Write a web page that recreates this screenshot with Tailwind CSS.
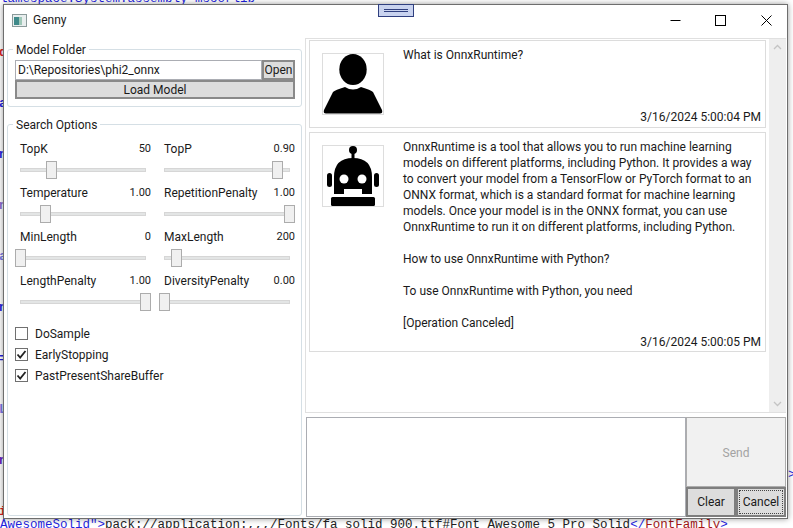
<!DOCTYPE html>
<html lang="en">
	<head>
		<meta charset="UTF-8" />
		<title>Genny</title>
		<script src="https://cdn.jsdelivr.net/npm/@tailwindcss/browser@4"></script>
	</head>
	<body class="bg-white">
		<div class="relative w-[793px] h-[528px] overflow-hidden bg-white font-['Roboto',sans-serif] text-[12px] text-[#1a1a1a]">
			<!-- editor behind the window -->
			<div class="absolute top-[11px] left-[-1px] font-['Liberation_Mono',monospace] text-[12.5px] leading-[17px] whitespace-pre font-bold text-[#1f1fe0]">
				<p class="text-[#d82020]">d</p>
				<p>a</p>
				<p>n</p>
				<p class="text-[#8a6ad0]">n</p>
				<p class="text-[#7a7ae8]">a</p>
				<p>n</p>
				<p>=</p>
				<p class="text-[#7a7ae8]">L</p>
				<p class="text-[#6020c0]">n</p>
				<p class="text-[#d82020]">i</p>
				<p class="text-[#f0a0a0]">=</p>
				<p class="text-[#d82020]">L</p>
				<p class="text-[#f0a0a0]">o</p>
				<p class="text-[#7a7ae8]">c</p>
				<p>L</p>
				<p>c</p>
				<p>a</p>
				<p>r</p>
				<p>c</p>
				<p>c</p>
				<p>c</p>
				<p>c</p>
				<p>c</p>
				<p>c</p>
				<p>A</p>
				<p>A</p>
				<p>A</p>
				<p>A</p>
			</div>
			<p class="absolute top-[-9px] left-0 font-['Liberation_Mono',monospace] text-[12.5px] leading-[17px] whitespace-pre text-[#1f1fe0]">lamespace:System.assembly=mscorlib</p>
			<p class="absolute top-[517px] left-0 font-['Liberation_Mono',monospace] text-[12.5px] leading-[17px] whitespace-pre text-[#1f1fe0]">AwesomeSolid"&gt;<span class="text-[#222]">pack://application:,,,/Fonts/fa_solid_900.ttf#Font Awesome 5 Pro Solid</span>&lt;/<span class="text-[#a31515]">FontFamily</span>&gt;</p>
			<p class="absolute top-[467px] left-[788px] font-['Liberation_Mono',monospace] text-[12.5px] leading-[17px] text-[#1f1fe0]">&gt;</p>

			<!-- app window -->
			<div class="absolute left-[3px] top-[4px] w-[785px] h-[515px] flex flex-col bg-white border border-[#6e6e6e] shadow-[0_0_6px_rgba(0,0,0,0.4)]">
				<div class="relative flex items-center h-[26px] shrink-0">
					<svg class="ml-[8px] mt-[4px] w-[15px] h-[13px]" viewBox="0 0 15 13">
						<rect x="0.5" y="0.5" width="14" height="12" fill="#e8eeee" stroke="#8a9a9a" />
						<rect x="2" y="3" width="5" height="8" fill="#3f8a8a" />
						<rect x="7" y="3" width="3" height="8" fill="#9fc8b8" />
					</svg>
					<span class="ml-[6px] mt-[4px]">Genny</span>
					<div class="ml-auto mt-[4px] flex items-center">
						<svg class="w-[11px] h-[11px]" viewBox="0 0 11 11"><path d="M0.5 5.5H10.5" stroke="#000" /></svg>
						<svg class="ml-[34px] w-[11px] h-[11px]" viewBox="0 0 11 11"><rect x="0.5" y="0.5" width="10" height="10" fill="none" stroke="#000" /></svg>
						<svg class="ml-[35px] mr-[15px] w-[11px] h-[11px]" viewBox="0 0 11 11"><path d="M0.5 0.5L10.5 10.5M10.5 0.5L0.5 10.5" stroke="#000" /></svg>
					</div>
				</div>

				<div class="flex flex-1 min-h-0">
					<!-- left options column -->
					<div class="w-[301px] shrink-0 pl-[3px] pr-[3px] pt-[18px] flex flex-col">
						<div class="relative h-[58px] border border-[#d5dfe5] rounded-[3px] pl-[7px] pr-[6px] pt-[10px]">
							<span class="absolute -top-[8px] left-[5px] bg-white px-[3px] leading-[16px]">Model Folder</span>
							<div class="flex h-[20px]">
								<div class="flex-1 border border-[#abadb3] pl-[2px] leading-[18px]">D:\Repositories\phi2_onnx</div>
								<button class="w-[33px] bg-[#dddddd] border-2 border-[#8a8a8a] leading-[14px]">Open</button>
							</div>
							<button class="block w-full h-[19px] pt-[1px] bg-[#dddddd] border-2 border-[#8a8a8a] leading-[14px]">Load Model</button>
						</div>

						<div class="relative mt-[17px] h-[392px] border border-[#d5dfe5] rounded-[3px] pl-[7px] pt-[14px]">
							<span class="absolute -top-[8px] left-[5px] bg-white px-[3px] leading-[16px]">Search Options</span>
							<div class="grid grid-cols-[136px_136px] gap-x-[8px] auto-rows-[44px]">
								<div>
									<div class="flex justify-between items-center h-[20px] mb-[2px] pl-[5px]"><span>TopK</span><span class="text-[11px]">50</span></div>
									<div class="relative h-[18px]"><div class="absolute left-[5px] right-[5px] top-[7px] h-[4px] bg-[#e3e5e5] border border-[#d6d6d6]"></div><div class="absolute left-[31px] top-0 w-[11px] h-[18px] bg-[#f0f0f0] border border-[#acacac]"></div></div>
								</div>
								<div>
									<div class="flex justify-between items-center h-[20px] mb-[2px] pl-[5px]"><span>TopP</span><span class="text-[11px]">0.90</span></div>
									<div class="relative h-[18px]"><div class="absolute left-[5px] right-[5px] top-[7px] h-[4px] bg-[#e3e5e5] border border-[#d6d6d6]"></div><div class="absolute left-[113px] top-0 w-[11px] h-[18px] bg-[#f0f0f0] border border-[#acacac]"></div></div>
								</div>
								<div>
									<div class="flex justify-between items-center h-[20px] mb-[2px] pl-[5px]"><span>Temperature</span><span class="text-[11px]">1.00</span></div>
									<div class="relative h-[18px]"><div class="absolute left-[5px] right-[5px] top-[7px] h-[4px] bg-[#e3e5e5] border border-[#d6d6d6]"></div><div class="absolute left-[25px] top-0 w-[11px] h-[18px] bg-[#f0f0f0] border border-[#acacac]"></div></div>
								</div>
								<div>
									<div class="flex justify-between items-center h-[20px] mb-[2px] pl-[5px]"><span>RepetitionPenalty</span><span class="text-[11px]">1.00</span></div>
									<div class="relative h-[18px]"><div class="absolute left-[5px] right-[5px] top-[7px] h-[4px] bg-[#e3e5e5] border border-[#d6d6d6]"></div><div class="absolute left-[125px] top-0 w-[11px] h-[18px] bg-[#f0f0f0] border border-[#acacac]"></div></div>
								</div>
								<div>
									<div class="flex justify-between items-center h-[20px] mb-[2px] pl-[5px]"><span>MinLength</span><span class="text-[11px]">0</span></div>
									<div class="relative h-[18px]"><div class="absolute left-[5px] right-[5px] top-[7px] h-[4px] bg-[#e3e5e5] border border-[#d6d6d6]"></div><div class="absolute left-0 top-0 w-[11px] h-[18px] bg-[#f0f0f0] border border-[#acacac]"></div></div>
								</div>
								<div>
									<div class="flex justify-between items-center h-[20px] mb-[2px] pl-[5px]"><span>MaxLength</span><span class="text-[11px]">200</span></div>
									<div class="relative h-[18px]"><div class="absolute left-[5px] right-[5px] top-[7px] h-[4px] bg-[#e3e5e5] border border-[#d6d6d6]"></div><div class="absolute left-[12px] top-0 w-[11px] h-[18px] bg-[#f0f0f0] border border-[#acacac]"></div></div>
								</div>
								<div>
									<div class="flex justify-between items-center h-[20px] mb-[2px] pl-[5px]"><span>LengthPenalty</span><span class="text-[11px]">1.00</span></div>
									<div class="relative h-[18px]"><div class="absolute left-[5px] right-[5px] top-[7px] h-[4px] bg-[#e3e5e5] border border-[#d6d6d6]"></div><div class="absolute left-[125px] top-0 w-[11px] h-[18px] bg-[#f0f0f0] border border-[#acacac]"></div></div>
								</div>
								<div>
									<div class="flex justify-between items-center h-[20px] mb-[2px] pl-[5px]"><span>DiversityPenalty</span><span class="text-[11px]">0.00</span></div>
									<div class="relative h-[18px]"><div class="absolute left-[5px] right-[5px] top-[7px] h-[4px] bg-[#e3e5e5] border border-[#d6d6d6]"></div><div class="absolute left-0 top-0 w-[11px] h-[18px] bg-[#f0f0f0] border border-[#acacac]"></div></div>
								</div>
							</div>
							<div class="mt-[8px] flex flex-col">
								<label class="flex items-center h-[21px] gap-[7px]"><span class="w-[13px] h-[13px] border border-[#707070] bg-white"></span><span>DoSample</span></label>
								<label class="flex items-center h-[21px] gap-[7px]"><span class="w-[13px] h-[13px] border border-[#707070] bg-white"><svg viewBox="0 0 11 11" class="w-[11px] h-[11px]"><path d="M1.5 5.5L4.2 8.5L9.5 2" fill="none" stroke="#222" stroke-width="1.8" /></svg></span><span>EarlyStopping</span></label>
								<label class="flex items-center h-[21px] gap-[7px]"><span class="w-[13px] h-[13px] border border-[#707070] bg-white"><svg viewBox="0 0 11 11" class="w-[11px] h-[11px]"><path d="M1.5 5.5L4.2 8.5L9.5 2" fill="none" stroke="#222" stroke-width="1.8" /></svg></span><span>PastPresentShareBuffer</span></label>
							</div>
						</div>
					</div>

					<!-- chat column -->
					<div class="flex-1 min-w-0 pt-[7px] pr-[1px] pb-[1px] flex flex-col">
						<div class="h-[375px] flex border border-[#e0e0e0] border-r-0 shrink-0">
							<div class="flex-1 min-w-0 px-[3px] pt-[1px] flex flex-col gap-[4px]">
								<div class="h-[88px] flex border border-[#dcdcdc]">
									<div class="ml-[12px] mt-[12px] w-[62px] h-[62px] border border-[#dddddd] shrink-0">
										<svg viewBox="0 0 60 60" class="w-[60px] h-[60px]">
											<ellipse cx="30" cy="15.5" rx="13.7" ry="15.5" />
											<path d="M1 56L10 38Q12 36 22 33Q30 38 38 33Q48 36 50 38L59 56Q60 59.5 57 59.5L3 59.5Q0 59.5 1 56Z" />
										</svg>
									</div>
									<div class="flex-1 ml-[19px] pt-[6px] pb-[2px] pr-[4px] flex flex-col justify-between leading-[16px]">
										<p>What is OnnxRuntime?</p>
										<p class="text-right">3/16/2024 5:00:04 PM</p>
									</div>
								</div>
								<div class="flex border border-[#dcdcdc]">
									<div class="ml-[12px] mt-[12px] w-[62px] h-[62px] border border-[#dddddd] shrink-0">
										<svg viewBox="0 0 60 60" class="w-[60px] h-[60px]">
											<circle cx="30" cy="4" r="4" />
											<rect x="28.5" y="6" width="3" height="8" />
											<path d="M11 48V31Q11 12 30 12Q49 12 49 31V48H39V43H21V48Z" />
											<rect x="4" y="27" width="5" height="14" rx="2.5" />
											<rect x="51" y="27" width="5" height="14" rx="2.5" />
											<circle cx="21" cy="33" r="4.5" fill="#fff" />
											<circle cx="39" cy="33" r="4.5" fill="#fff" />
											<rect x="8" y="51" width="44" height="9" rx="1.5" />
										</svg>
									</div>
									<div class="flex-1 ml-[19px] pt-[6px] pb-[1px] pr-[4px] leading-[16px] whitespace-nowrap">
										<p>OnnxRuntime is a tool that allows you to run machine learning</p>
										<p>models on different platforms, including Python. It provides a way</p>
										<p>to convert your model from a TensorFlow or PyTorch format to an</p>
										<p>ONNX format, which is a standard format for machine learning</p>
										<p>models. Once your model is in the ONNX format, you can use</p>
										<p>OnnxRuntime to run it on different platforms, including Python.</p>
										<p class="mt-[16px]">How to use OnnxRuntime with Python?</p>
										<p class="mt-[16px]">To use OnnxRuntime with Python, you need</p>
										<p class="mt-[16px]">[Operation Canceled]</p>
										<p class="mt-[3px] text-right">3/16/2024 5:00:05 PM</p>
									</div>
								</div>
							</div>
							<div class="w-[17px] shrink-0 bg-[#eeeeee] flex flex-col justify-between items-center py-[5px]">
								<svg class="w-[9px] h-[6px]" viewBox="0 0 9 6"><path d="M1 5L4.5 1.5L8 5" fill="none" stroke="#c4c4c4" stroke-width="1.3" /></svg>
								<svg class="w-[9px] h-[6px]" viewBox="0 0 9 6"><path d="M1 1L4.5 4.5L8 1" fill="none" stroke="#c4c4c4" stroke-width="1.3" /></svg>
							</div>
						</div>
						<div class="mt-[4px] flex flex-1 min-h-0 pl-[1px]">
							<div class="flex-1 border border-[#abadb3]"></div>
							<div class="w-[100px] shrink-0 flex flex-col">
								<button class="flex-1 pt-[1px] bg-[#f1f1f1] border border-[#adadad] text-[#a3a3a3]">Send</button>
								<div class="flex h-[30px]">
									<button class="w-[50px] bg-[#dddddd] border-2 border-[#7e7e7e]">Clear</button>
									<button class="w-[50px] bg-[#dddddd] border-2 border-[#7e7e7e] p-[1px]"><span class="flex items-center justify-center h-full border border-dotted border-[#444]">Cancel</span></button>
								</div>
							</div>
						</div>
					</div>
				</div>
			</div>

			<!-- pin bar of the debug toolbar -->
			<div class="absolute left-[378px] top-[4px] w-[36px] h-[13px] bg-[#c9d3ef] border border-[#2f3f7f] flex flex-col justify-center gap-[1px] px-[5px]">
				<div class="h-px bg-[#2f3f7f]"></div>
				<div class="h-px bg-[#2f3f7f]"></div>
			</div>
		</div>
	</body>
</html>
